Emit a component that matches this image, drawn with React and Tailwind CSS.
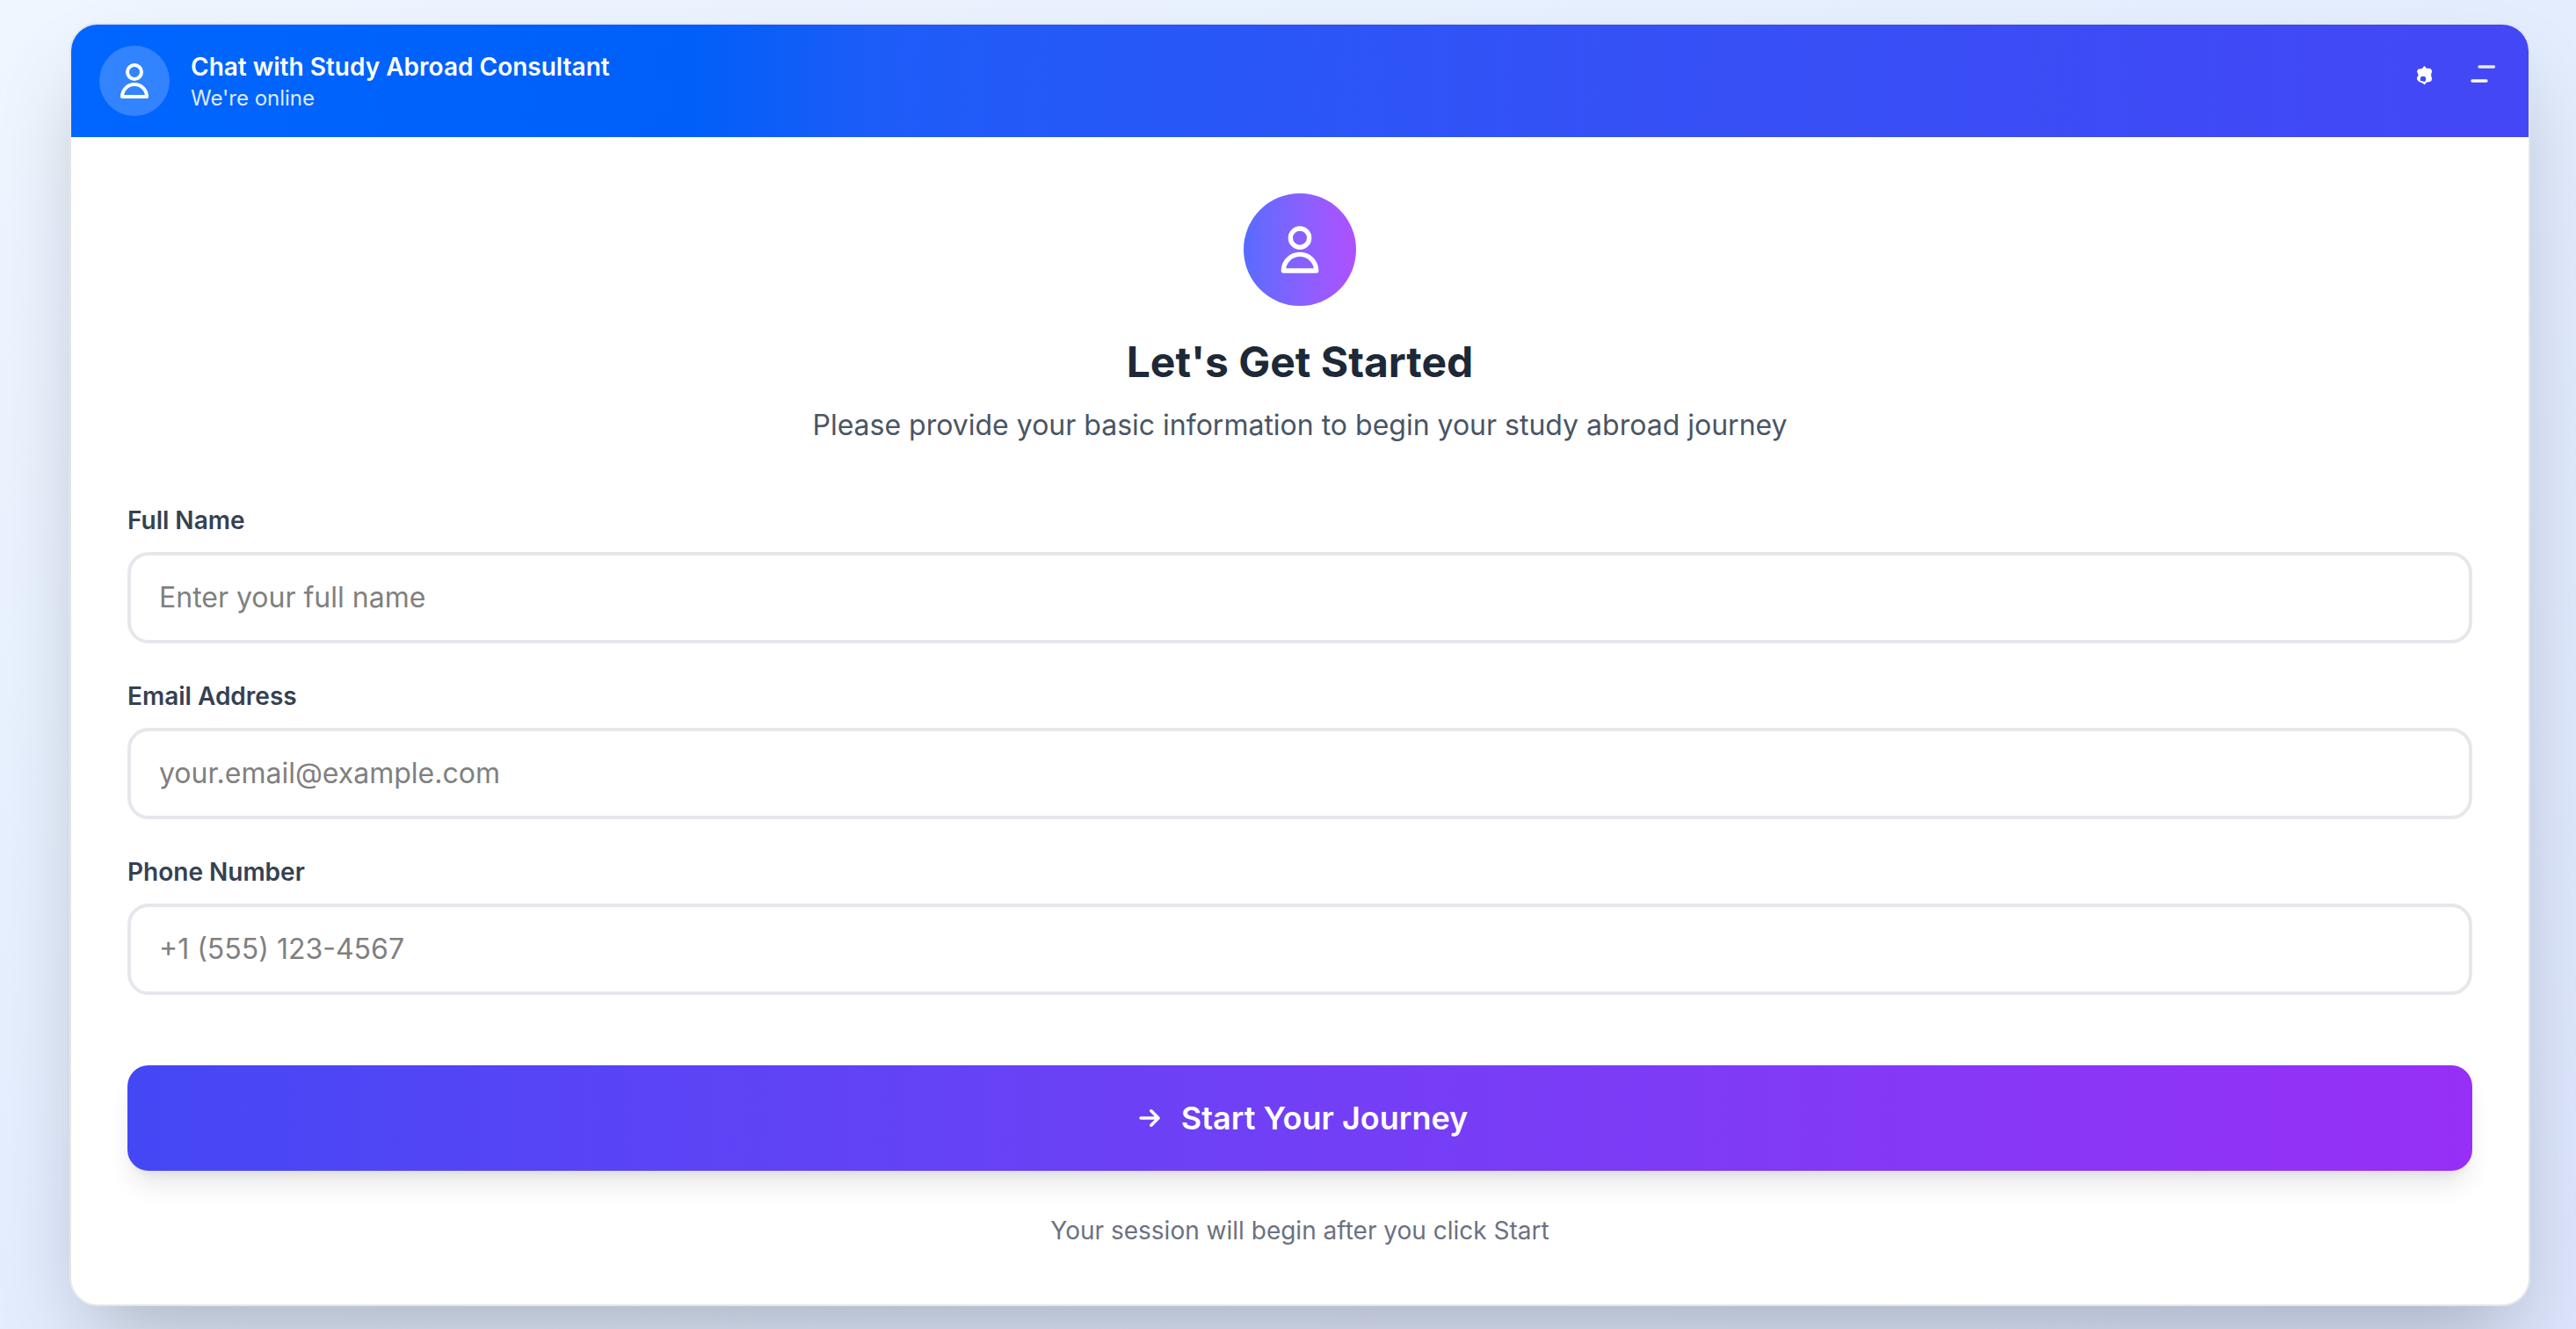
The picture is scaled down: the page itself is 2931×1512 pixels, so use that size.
const FIELDS = [
  { id: "name", label: "Full Name", type: "text", placeholder: "Enter your full name" },
  { id: "email", label: "Email Address", type: "email", placeholder: "your.email@example.com" },
  { id: "phone", label: "Phone Number", type: "tel", placeholder: "+1 (555) 123-4567" },
];

function PersonIcon({ className }) {
  return (
    <svg viewBox="0 -1 24 24" fill="none" stroke="currentColor" strokeWidth="2" strokeLinejoin="round" className={className} aria-hidden="true">
      <circle cx="12" cy="6" r="4" />
      <path d="M5 20C5 16.1 8.1 13 12 13S19 16.1 19 20Z" />
    </svg>
  );
}

function GearIcon() {
  return (
    <svg viewBox="0 0 40 40" className="size-10" aria-hidden="true">
      <path
        fill="currentColor"
        stroke="currentColor"
        strokeWidth="1.5"
        strokeLinejoin="round"
        fillRule="evenodd"
        d="M17.500 12L19.500 14.500H22L24.500 15L25.500 17.500L24.500 19.500V23L25.500 25.500L24.500 28L22 28.500L19.500 29L17.500 31.500L15.500 29L12 28.500L10 26.500L9.800 24.500L11.500 22L11 20L9.800 17.500L10.800 15.200L13.500 15L15.500 14.500ZM16 22A4 4 0 1 0 16 30A4 4 0 1 0 16 22Z"
      />
    </svg>
  );
}

function MenuIcon() {
  return (
    <svg viewBox="0 0 40 40" className="size-10" fill="none" stroke="currentColor" strokeWidth="3.3" strokeLinecap="round" aria-hidden="true">
      <path d="M16 12H32.500" opacity=".88" />
      <path d="M8 28H24" />
    </svg>
  );
}

export default function App() {
  return (
    <main className="min-h-screen bg-linear-to-br from-[#eff6ff] via-[#e3edfe] to-[#dce5fc] pt-[26px] pr-[52px] pb-[26px] pl-[79px] font-['Inter',sans-serif]">
      <section className="overflow-hidden rounded-[32px] border-2 border-[#e4e6ea] bg-white shadow-[0_50px_100px_-24px_rgba(0,0,0,0.25)]">
        <header className="flex items-center justify-between bg-[linear-gradient(90deg,#0066ff_0%,#005ff9_25%,#1e5cf8_33%,#3352f6_60%,#4447f5_100%)] px-8 py-6 text-white">
          <div className="flex items-center gap-6">
            <div className="flex size-20 items-center justify-center rounded-full bg-white/20">
              <PersonIcon className="size-12" />
            </div>
            <div>
              <h1 className="text-[28px] leading-10 font-semibold">Chat with Study Abroad Consultant</h1>
              <p className="text-2xl leading-8 text-[#dbeafe]">We're online</p>
            </div>
          </div>
          <div className="flex items-center gap-6 pb-4">
            <button type="button" aria-label="Settings">
              <GearIcon />
            </button>
            <button type="button" aria-label="Menu">
              <MenuIcon />
            </button>
          </div>
        </header>

        <div className="p-16">
          <div className="flex flex-col items-center text-center">
            <div className="mb-8 flex size-32 items-center justify-center rounded-full bg-linear-to-r from-[#566bff] to-[#ae50ff] text-white">
              <PersonIcon className="size-16" />
            </div>
            <h2 className="mb-4 text-5xl leading-[64px] font-bold text-[#1d2936]">Let's Get Started</h2>
            <p className="text-[32px] leading-12 text-[#4a5565]">
              Please provide your basic information to begin your study abroad journey
            </p>
          </div>

          <form className="mt-16" onSubmit={(e) => e.preventDefault()}>
            <div className="flex flex-col gap-10">
              {FIELDS.map((f) => (
                <div key={f.id} className="flex flex-col gap-4">
                  <label htmlFor={f.id} className="text-[28px] leading-10 font-semibold text-[#354152]">
                    {f.label}
                  </label>
                  <input
                    id={f.id}
                    type={f.type}
                    placeholder={f.placeholder}
                    className="w-full rounded-3xl border-4 border-[#e5e7eb] px-8 py-6 text-[32px] leading-12 placeholder:text-[#808080]"
                  />
                </div>
              ))}
            </div>
            <button
              type="submit"
              className="mt-20 flex w-full items-center justify-center gap-4 rounded-3xl bg-linear-to-r from-[#4447f5] to-[#962ff7] py-8 text-4xl leading-14 font-semibold text-white shadow-[0_20px_30px_-6px_rgba(0,0,0,0.1),0_8px_12px_-8px_rgba(0,0,0,0.1)]"
            >
              <svg viewBox="0 0 40 40" className="size-10" fill="none" stroke="currentColor" strokeWidth="3.5" strokeLinecap="round" strokeLinejoin="round" aria-hidden="true">
                <path d="M10 20H30M21.800 11.800L30 20L21.800 28.200" />
              </svg>
              Start Your Journey
            </button>
          </form>

          <p className="mt-12 text-center text-[28px] leading-10 text-[#6a7282]">Your session will begin after you click Start</p>
        </div>
      </section>
    </main>
  );
}
